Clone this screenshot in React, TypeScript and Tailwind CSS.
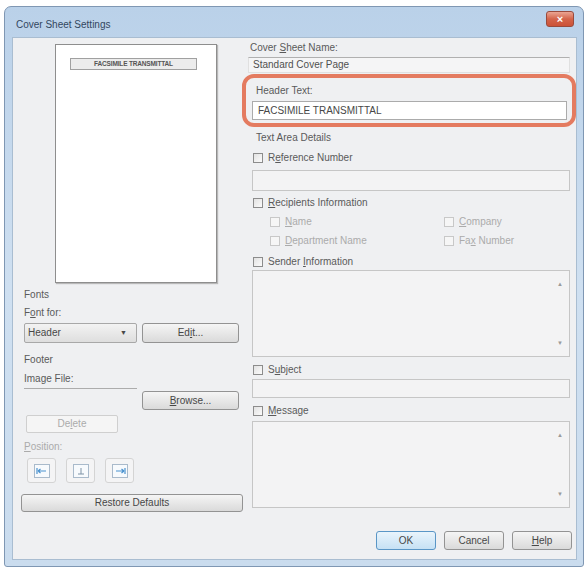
import React from 'react'

// Cover Sheet Settings dialog (Windows 7 style)

const font = { fontFamily: '"Liberation Sans", Arial, sans-serif' }

function U({ children }: { children: React.ReactNode }) {
  return <span className="underline underline-offset-1">{children}</span>
}

function Check({ disabled, className = '' }: { disabled?: boolean; className?: string }) {
  return (
    <span
      className={`inline-block w-[10px] h-[10px] shrink-0 border ${
        disabled ? 'border-[#c8c8c8] bg-[#f6f6f6]' : 'border-[#8c8c8c] bg-gradient-to-br from-[#e2e2e2] to-[#fbfbfb]'
      } ${className}`}
    />
  )
}

function CheckRow({ label, disabled, className = '' }: { label: React.ReactNode; disabled?: boolean; className?: string }) {
  return (
    <div className={`flex items-center h-[14px] ${className}`}>
      <Check disabled={disabled} />
      <span className={`ml-[5px] ${disabled ? 'text-[#ababab]' : 'text-[#5a5a5a]'}`}>{label}</span>
    </div>
  )
}

function Btn({ children, className = '', primary }: { children: React.ReactNode; className?: string; primary?: boolean }) {
  return (
    <div
      className={`flex items-center justify-center rounded-[3px] border text-[#474747] ${
        primary
          ? 'border-[#5a96c6] bg-gradient-to-b from-[#e9f4fc] to-[#c6e1f4]'
          : 'border-[#939393] bg-gradient-to-b from-[#f5f5f5] to-[#dadada]'
      } ${className}`}
    >
      {children}
    </div>
  )
}

function TextArea({ className = '' }: { className?: string }) {
  return (
    <div className={`relative border border-[#c6c6c6] bg-[#f3f3f4] ${className}`}>
      <span className="absolute right-[6px] top-[6px] text-[6px] text-[#9a9a9a]">▲</span>
      <span className="absolute right-[6px] bottom-[6px] text-[6px] text-[#9a9a9a]">▼</span>
    </div>
  )
}

function PosIcon({ kind }: { kind: 'left' | 'center' | 'right' }) {
  return (
    <svg width="16" height="14" viewBox="0 0 16 14">
      <rect x="0.5" y="0.5" width="15" height="13" fill="#f7fafd" stroke="#a9bacb" />
      {kind === 'left' && (
        <g stroke="#4a92cf" strokeWidth="1.2" fill="none">
          <line x1="3" y1="4" x2="3" y2="10" />
          <path d="M4 7 H12 M4 7 L6.5 5 M4 7 L6.5 9" />
        </g>
      )}
      {kind === 'center' && (
        <g stroke="#7f93a6" strokeWidth="1" fill="none">
          <line x1="8" y1="4" x2="8" y2="10" />
          <line x1="5" y1="10" x2="11" y2="10" />
        </g>
      )}
      {kind === 'right' && (
        <g stroke="#4a92cf" strokeWidth="1.2" fill="none">
          <line x1="13" y1="4" x2="13" y2="10" />
          <path d="M4 7 H12 M12 7 L9.5 5 M12 7 L9.5 9" />
        </g>
      )}
    </svg>
  )
}

function PosBtn({ kind }: { kind: 'left' | 'center' | 'right' }) {
  return (
    <div className="w-[29px] h-[25px] flex items-center justify-center rounded-[3px] border border-[#d4d4d4] bg-[#f4f4f5]">
      <PosIcon kind={kind} />
    </div>
  )
}

export default function App() {
  return (
    <div className="w-[587px] h-[570px] bg-white pl-[4px] pt-[6px] text-[10px] leading-[14px]" style={font}>
      <div className="w-[580px] h-[561px] rounded-t-[7px] rounded-b-[3px] border border-[#7f97b3] bg-gradient-to-b from-[#bad1e9] via-[#cfe0f1] to-[#cadcee] flex flex-col">
        {/* title bar */}
        <div className="h-[30px] flex items-start justify-between pl-[11px] pr-[9px]">
          <span className="mt-[11px] text-[#33475f]">Cover Sheet Settings</span>
          <div className="mt-[4px] w-[28px] h-[16px] rounded-[3px] border border-[#9a4a3c] bg-gradient-to-b from-[#eaa593] via-[#d4644a] to-[#cc5238] flex items-center justify-center text-white text-[11px] font-bold leading-none">
            ×
          </div>
        </div>

        {/* body */}
        <div className="ml-[7px] w-[565px] h-[523px] border border-[#a9bdd1] bg-[#eff0f2] flex">
          {/* left column */}
          <div className="w-[232px] flex flex-col">
            <div className="ml-[42px] mt-[6px] w-[162px] h-[239px] border border-[#8e8e8e] bg-white shadow-[1px_1px_1px_#b8b8b8]">
              <div className="ml-[14px] mt-[13px] w-[127px] h-[12px] border border-[#a0a0a0] bg-[#ececec] flex items-center justify-center text-[6.5px] font-bold text-[#555] leading-none tracking-tight">
                FACSIMILE TRANSMITTAL
              </div>
            </div>
            <div className="ml-[11px] mt-[5px] text-[#5a5a5a]">Fonts</div>
            <div className="ml-[11px] mt-[4px] text-[#5a5a5a]">
              F<U>o</U>nt for:
            </div>
            <div className="ml-[11px] mt-[3px] flex gap-[5px]">
              <div className="w-[113px] h-[20px] rounded-[2px] border border-[#a8a8a8] bg-gradient-to-b from-[#f3f3f3] to-[#dedede] flex items-center justify-between px-[3px] text-[#474747]">
                <span>Header</span>
                <span className="text-[7px] mr-[6px]">▼</span>
              </div>
              <Btn className="w-[97px] h-[20px]">
                Ed<U>i</U>t...
              </Btn>
            </div>
            <div className="ml-[11px] mt-[10px] text-[#5a5a5a]">Footer</div>
            <div className="ml-[11px] mt-[5px] text-[#5a5a5a]">Image File:</div>
            <div className="ml-[11px] mt-[2px] w-[113px] h-px bg-[#acacac]" />
            <Btn className="ml-[129px] mt-[2px] w-[97px] h-[19px]">
              <U>B</U>rowse...
            </Btn>
            <div className="ml-[13px] mt-[5px] w-[92px] h-[18px] rounded-[2px] border border-[#cfcfcf] bg-[#f5f5f5] flex items-center justify-center text-[#ababab]">
              De<U>l</U>ete
            </div>
            <div className="ml-[11px] mt-[7px] text-[#ababab]">
              <U>P</U>osition:
            </div>
            <div className="ml-[14px] mt-[4px] flex gap-[10px]">
              <PosBtn kind="left" />
              <PosBtn kind="center" />
              <PosBtn kind="right" />
            </div>
            <Btn className="ml-[8px] mt-[11px] w-[222px] h-[18px]">Restore Defaults</Btn>
          </div>

          {/* right column */}
          <div className="flex-1 flex flex-col">
            <div className="ml-[5px] mt-[3px] text-[#5a5a5a]">
              Cover <U>S</U>heet Name:
            </div>
            <div className="ml-[3px] mt-[2px] w-[322px] h-[16px] border border-[#e0e0e0] border-t-[#b0b0b0] bg-[#f5f5f6] flex items-center pl-[4px] text-[#505050]">
              Standard Cover Page
            </div>
            <div className="-ml-[3px] mt-[1px] w-[334px] h-[53px] rounded-[12px] border-[4px] border-[#e47b60] flex flex-col">
              <div className="ml-[10px] mt-[6px] text-[#5a5a5a]">Header Text:</div>
              <div className="ml-[6px] mt-[3px] w-[315px] h-[19px] border border-[#ababab] bg-white flex items-center pl-[5px] text-[#474747]">
                FACSIMILE TRANSMITTAL
              </div>
            </div>
            <div className="ml-[11px] mt-[4px] text-[#5a5a5a]">Text Area Details</div>
            <CheckRow
              className="ml-[8px] mt-[6px]"
              label={
                <>
                  R<U>e</U>ference Number
                </>
              }
            />
            <div className="ml-[7px] mt-[5px] w-[318px] h-[21px] border border-[#c6c6c6] bg-[#f3f3f4]" />
            <CheckRow
              className="ml-[8px] mt-[5px]"
              label={
                <>
                  <U>R</U>ecipients Information
                </>
              }
            />
            <div className="ml-[25px] mt-[5px] flex">
              <CheckRow
                disabled
                className="w-[174px]"
                label={
                  <>
                    <U>N</U>ame
                  </>
                }
              />
              <CheckRow
                disabled
                label={
                  <>
                    <U>C</U>ompany
                  </>
                }
              />
            </div>
            <div className="ml-[25px] mt-[5px] flex">
              <CheckRow
                disabled
                className="w-[174px]"
                label={
                  <>
                    <U>D</U>epartment Name
                  </>
                }
              />
              <CheckRow
                disabled
                label={
                  <>
                    Fa<U>x</U> Number
                  </>
                }
              />
            </div>
            <CheckRow
              className="ml-[8px] mt-[7px]"
              label={
                <>
                  Sender <U>I</U>nformation
                </>
              }
            />
            <TextArea className="ml-[7px] mt-[1px] w-[318px] h-[87px]" />
            <CheckRow
              className="ml-[8px] mt-[6px]"
              label={
                <>
                  S<U>u</U>bject
                </>
              }
            />
            <div className="ml-[7px] mt-[2px] w-[318px] h-[19px] border border-[#c6c6c6] bg-[#f3f3f4]" />
            <CheckRow
              className="ml-[8px] mt-[6px]"
              label={
                <>
                  <U>M</U>essage
                </>
              }
            />
            <TextArea className="ml-[7px] mt-[3px] w-[318px] h-[87px]" />
            <div className="ml-[131px] mt-[23px] flex gap-[8px]">
              <Btn primary className="w-[60px] h-[19px]">
                OK
              </Btn>
              <Btn className="w-[60px] h-[19px]">Cancel</Btn>
              <Btn className="w-[60px] h-[19px]">
                <U>H</U>elp
              </Btn>
            </div>
          </div>
        </div>
      </div>
    </div>
  )
}
